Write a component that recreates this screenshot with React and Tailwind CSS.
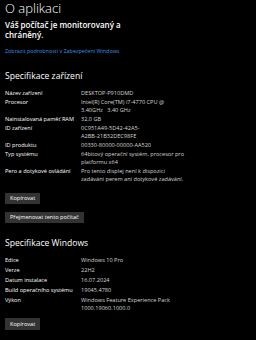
import React from 'react';

// Device spec rows, as shown in the settings page
const deviceSpecs = [
  ['Název zařízení', ['DESKTOP-P910DMD']],
  ['Procesor', ['Intel(R) Core(TM) i7-4770 CPU @', '3.40GHz   3.40 GHz']],
  ['Nainstalovaná paměť RAM', ['32,0 GB']],
  ['ID zařízení', ['0C951A49-5D42-42A5-', 'A2BB-21B32DEC98FE']],
  ['ID produktu', ['00330-80000-00000-AA520']],
  ['Typ systému', ['64bitový operační systém, procesor pro', 'platformu x64']],
  ['Pero a dotykové ovládání', ['Pro tento displej není k dispozici', 'zadávání perem ani dotykové zadávání.']],
];

const windowsSpecs = [
  ['Edice', ['Windows 10 Pro']],
  ['Verze', ['22H2']],
  ['Datum instalace', ['16.07.2024']],
  ['Build operačního systému', ['19045.4780']],
  ['Výkon', ['Windows Feature Experience Pack', '1000.19060.1000.0']],
];

const SpecRow = ({ label, lines }) => (
  <div className="flex text-[5.6px] leading-[8px]">
    <div className="w-[76px] shrink-0 text-white">{label}</div>
    <div className="text-[#d4d4d4]">
      {lines.map((l, i) => (
        <div key={i} className="whitespace-pre">{l}</div>
      ))}
    </div>
  </div>
);

const Button = ({ children, className = '' }) => (
  <div className={`h-[11px] bg-[#333333] text-white text-[5.6px] leading-[11px] px-[5px] w-fit ${className}`}>
    {children}
  </div>
);

export default function App() {
  return (
    <div className="w-[256px] h-[340px] bg-black text-white overflow-hidden pl-[5px] pt-[1px] font-['Open_Sans',sans-serif]">
      <h1 className="text-[13px] font-light leading-[14px]">O aplikaci</h1>

      <p className="mt-[5px] text-[8px] font-semibold leading-[9.5px] whitespace-nowrap">
        Váš počítač je monitorovaný a
        <br />
        chráněný.
      </p>

      <div className="mt-[9px] text-[5.4px] leading-[6px] text-[#3f93e0]">
        Zobrazit podrobnosti v Zabezpečení Windows
      </div>

      <h2 className="mt-[17px] text-[8.6px] leading-[10px]">Specifikace zařízení</h2>

      <div className="mt-[8px] flex flex-col gap-[1px]">
        {deviceSpecs.map(([label, lines]) => (
          <SpecRow key={label} label={label} lines={lines} />
        ))}
      </div>

      <Button className="mt-[10px]">Kopírovat</Button>
      <Button className="mt-[8px]">Přejmenovat tento počítač</Button>

      <h2 className="mt-[15px] text-[8.6px] leading-[10px]">Specifikace Windows</h2>

      <div className="mt-[8px] flex flex-col gap-[2px]">
        {windowsSpecs.map(([label, lines]) => (
          <SpecRow key={label} label={label} lines={lines} />
        ))}
      </div>

      <Button className="mt-[6px] h-[12px] leading-[12px]">Kopírovat</Button>
    </div>
  );
}
